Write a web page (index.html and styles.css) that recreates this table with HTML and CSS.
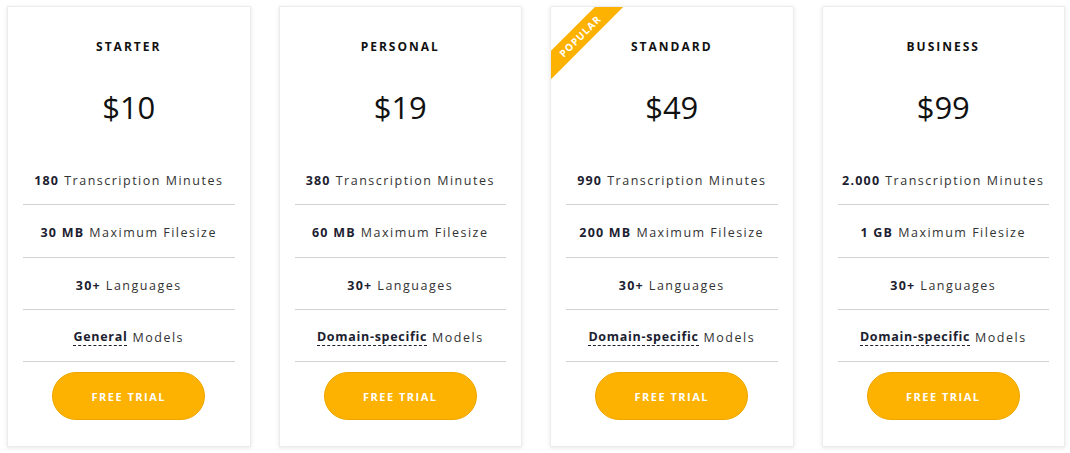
FILE: index.html
```html
<!DOCTYPE html>
<html lang="en">
<head>
<meta charset="utf-8">
<title>Pricing</title>
<link rel="stylesheet" href="styles.css">
</head>
<body>
<div class="pricing">
  <div class="card">
    <h3 class="plan">STARTER</h3>
    <div class="price">$10</div>
    <ul class="features">
      <li><b>180</b> Transcription Minutes</li>
      <li><b>30 MB</b> Maximum Filesize</li>
      <li><b>30+</b> Languages</li>
      <li><b class="dash">General</b> Models</li>
    </ul>
    <a class="btn">FREE TRIAL</a>
  </div>
  <div class="card">
    <h3 class="plan">PERSONAL</h3>
    <div class="price">$19</div>
    <ul class="features">
      <li><b>380</b> Transcription Minutes</li>
      <li><b>60 MB</b> Maximum Filesize</li>
      <li><b>30+</b> Languages</li>
      <li><b class="dash">Domain-specific</b> Models</li>
    </ul>
    <a class="btn">FREE TRIAL</a>
  </div>
  <div class="card">
    <div class="ribbon">POPULAR</div>
    <h3 class="plan">STANDARD</h3>
    <div class="price">$49</div>
    <ul class="features">
      <li><b>990</b> Transcription Minutes</li>
      <li><b>200 MB</b> Maximum Filesize</li>
      <li><b>30+</b> Languages</li>
      <li><b class="dash">Domain-specific</b> Models</li>
    </ul>
    <a class="btn">FREE TRIAL</a>
  </div>
  <div class="card">
    <h3 class="plan">BUSINESS</h3>
    <div class="price">$99</div>
    <ul class="features">
      <li><b>2.000</b> Transcription Minutes</li>
      <li><b>1 GB</b> Maximum Filesize</li>
      <li><b>30+</b> Languages</li>
      <li><b class="dash">Domain-specific</b> Models</li>
    </ul>
    <a class="btn">FREE TRIAL</a>
  </div>
</div>
</body>
</html>
```
FILE: styles.css
```css
* { box-sizing: border-box; }
html, body { margin: 0; padding: 0; background: #ffffff; }
body {
  font-family: "Open Sans", "Noto Sans", "DejaVu Sans", sans-serif;
  color: #333;
}
.pricing {
  display: grid;
  grid-template-columns: repeat(4, 1fr);
  gap: 28px;
  padding: 6px 5px 6px 7px;
}
.card {
  position: relative;
  overflow: hidden;
  height: 441px;
  background: #fff;
  border: 1px solid #ececec;
  box-shadow: 0 1px 4px rgba(0,0,0,0.10);
  display: flex;
  flex-direction: column;
  align-items: center;
  padding-top: 30px;
}
.plan {
  margin: 0;
  font-size: 12px;
  line-height: 20px;
  font-weight: 700;
  letter-spacing: 2px;
  color: #111;
}
.price {
  margin-top: 30px;
  font-size: 31px;
  line-height: 40px;
  color: #111;
}
.features {
  list-style: none;
  margin: 26px 0 0;
  padding: 0 15px;
  align-self: stretch;
}
.features li {
  height: 52px;
  border-bottom: 1px solid #d2d2d2;
  display: flex;
  align-items: center;
  justify-content: center;
  padding-top: 3px;
  font-size: 12.5px;
  letter-spacing: 1.5px;
  color: #333;
  white-space: nowrap;
}
.features li:nth-child(2) { height: 53px; }
.features li:nth-child(4) { padding-top: 4px; }
.features b {
  font-weight: 700;
  color: #1c2130;
  margin-right: 5px;
  letter-spacing: 1.2px;
}
.features b.dash {
  border-bottom: 1px dashed #1c2130;
  letter-spacing: 0.7px;
  line-height: 16px;
}
.btn {
  margin-top: 10px;
  width: 153px;
  height: 48px;
  border-radius: 24px;
  background: #fdb100;
  border: 1px solid #eea600;
  color: #fff;
  font-size: 11px;
  font-weight: 700;
  letter-spacing: 1.5px;
  display: flex;
  align-items: center;
  justify-content: center;
  cursor: pointer;
}
.ribbon {
  position: absolute;
  top: 19px;
  left: -31px;
  width: 120px;
  height: 20px;
  background: #fdb100;
  color: #fff;
  font-size: 10px;
  font-weight: 700;
  letter-spacing: 1px;
  display: flex;
  align-items: center;
  justify-content: center;
  transform: rotate(-45deg);
}
```
